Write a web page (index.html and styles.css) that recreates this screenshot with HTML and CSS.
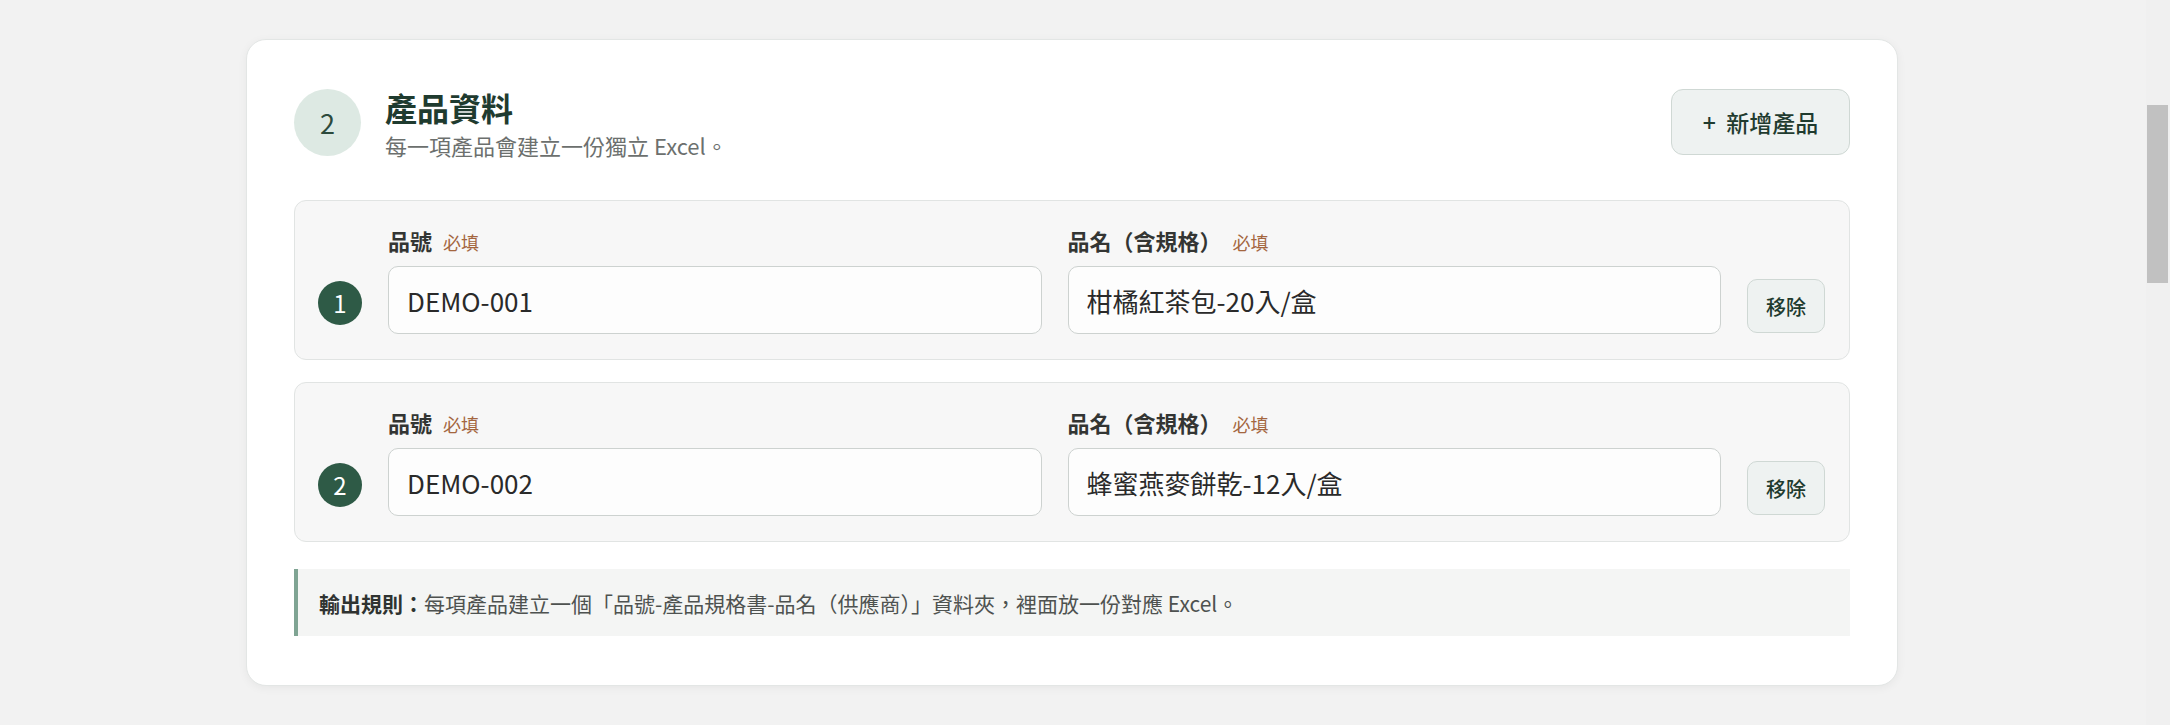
FILE: index.html
```html
<!DOCTYPE html>
<html lang="zh-Hant">
<head>
<meta charset="utf-8">
<title>產品資料</title>
<link rel="stylesheet" href="styles.css">
</head>
<body>
<main class="page">
  <section class="card">
    <header class="card-head">
      <div class="step">2</div>
      <div class="head-text">
        <h2 class="title">產品資料</h2>
        <p class="subtitle">每一項產品會建立一份獨立 Excel。</p>
      </div>
      <button class="btn-add" type="button">+&nbsp; 新增產品</button>
    </header>

    <div class="rows">
      <div class="row">
        <div class="row-num">1</div>
        <label class="field">
          <span class="label">品號 <em class="req">必填</em></span>
          <input class="input" type="text" value="DEMO-001">
        </label>
        <label class="field">
          <span class="label">品名（含規格） <em class="req">必填</em></span>
          <input class="input" type="text" value="柑橘紅茶包-20入/盒">
        </label>
        <button class="btn-remove" type="button">移除</button>
      </div>

      <div class="row">
        <div class="row-num">2</div>
        <label class="field">
          <span class="label">品號 <em class="req">必填</em></span>
          <input class="input" type="text" value="DEMO-002">
        </label>
        <label class="field">
          <span class="label">品名（含規格） <em class="req">必填</em></span>
          <input class="input" type="text" value="蜂蜜燕麥餅乾-12入/盒">
        </label>
        <button class="btn-remove" type="button">移除</button>
      </div>
    </div>

    <div class="notice"><strong>輸出規則：</strong>每項產品建立一個「品號-產品規格書-品名（供應商）」資料夾，裡面放一份對應 Excel。</div>
  </section>
</main>
<div class="scrollbar"><div class="thumb"></div></div>
</body>
</html>
```

FILE: styles.css
```css
html, body {
  margin: 0;
  padding: 0;
  height: 100%;
  overflow: hidden;
  background: #f2f2f2;
  font-family: "Noto Sans CJK TC", "Noto Sans", sans-serif;
  color: #2b2b2b;
}

.page {
  width: 2144px;
  padding-top: 39px;
  display: flex;
  justify-content: center;
}

.card {
  box-sizing: border-box;
  width: 1652px;
  background: #ffffff;
  border: 1px solid #e3e6e5;
  border-radius: 20px;
  box-shadow: 0 2px 10px rgba(0, 0, 0, 0.05);
  padding: 49px 47px 49px 47px;
}

.card-head {
  display: flex;
  align-items: flex-start;
  margin-bottom: 41px;
}

.step {
  width: 67px;
  height: 67px;
  border-radius: 50%;
  background: #dde9e3;
  color: #2c4a3c;
  font-size: 27px;
  line-height: 67px;
  text-align: center;
  flex: none;
}

.head-text {
  margin-left: 24px;
}

.title {
  margin: 0;
  font-size: 32px;
  line-height: 36px;
  font-weight: 700;
  color: #1f3b2f;
}

.subtitle {
  margin: 6px 0 0;
  font-size: 22px;
  line-height: 28px;
  color: #6c706e;
}

.btn-add {
  margin-left: auto;
  box-sizing: border-box;
  width: 179px;
  height: 66px;
  background: #eef2f1;
  border: 1.5px solid #cfd8d4;
  border-radius: 12px;
  font-family: inherit;
  font-size: 23px;
  font-weight: 500;
  color: #1f3b2f;
  padding: 0;
}

.rows {
  display: flex;
  flex-direction: column;
  gap: 22px;
}

.row {
  display: grid;
  grid-template-columns: 44px 1fr 1fr 78px;
  column-gap: 26px;
  align-items: end;
  background: #f7f7f7;
  border: 1px solid #e1e4e3;
  border-radius: 12px;
  padding: 24px 24px 25px 23px;
}

.row-num {
  width: 44px;
  height: 44px;
  border-radius: 50%;
  background: #2e5a46;
  color: #ffffff;
  font-size: 24px;
  line-height: 44px;
  text-align: center;
  margin-bottom: 9px;
}

.field {
  display: flex;
  flex-direction: column;
}

.label {
  display: block;
  height: 30px;
  font-size: 22px;
  line-height: 30px;
  font-weight: 700;
  color: #333533;
  margin-bottom: 11px;
}

.req {
  font-style: normal;
  font-weight: 400;
  font-size: 18px;
  line-height: 1;
  color: #a4663f;
  margin-left: 6px;
}

.input {
  box-sizing: border-box;
  width: 100%;
  height: 68px;
  background: #fdfdfd;
  border: 1.5px solid #cdd2d0;
  border-radius: 10px;
  padding: 0 18px;
  font-family: inherit;
  font-size: 26px;
  color: #2a2a2a;
  outline: none;
}

.btn-remove {
  box-sizing: border-box;
  width: 78px;
  height: 54px;
  background: #eef2f1;
  border: 1.5px solid #cfd8d4;
  border-radius: 10px;
  font-family: inherit;
  font-size: 20px;
  font-weight: 500;
  color: #1f3b2f;
  padding: 0;
  margin-bottom: 1px;
}

.notice {
  margin-top: 27px;
  height: 67px;
  box-sizing: border-box;
  background: #f4f5f4;
  border-left: 4px solid #7fa493;
  padding: 0 0 0 21px;
  display: flex;
  align-items: center;
  font-size: 21px;
  color: #4e5250;
}

.notice strong {
  font-weight: 700;
  color: #2f3331;
}

.scrollbar {
  position: fixed;
  top: 0;
  right: 0;
  width: 24px;
  height: 100%;
  background: #f0f0f0;
}

.thumb {
  position: absolute;
  top: 105px;
  left: 1px;
  width: 21px;
  height: 178px;
  background: #c1c1c1;
}
```
